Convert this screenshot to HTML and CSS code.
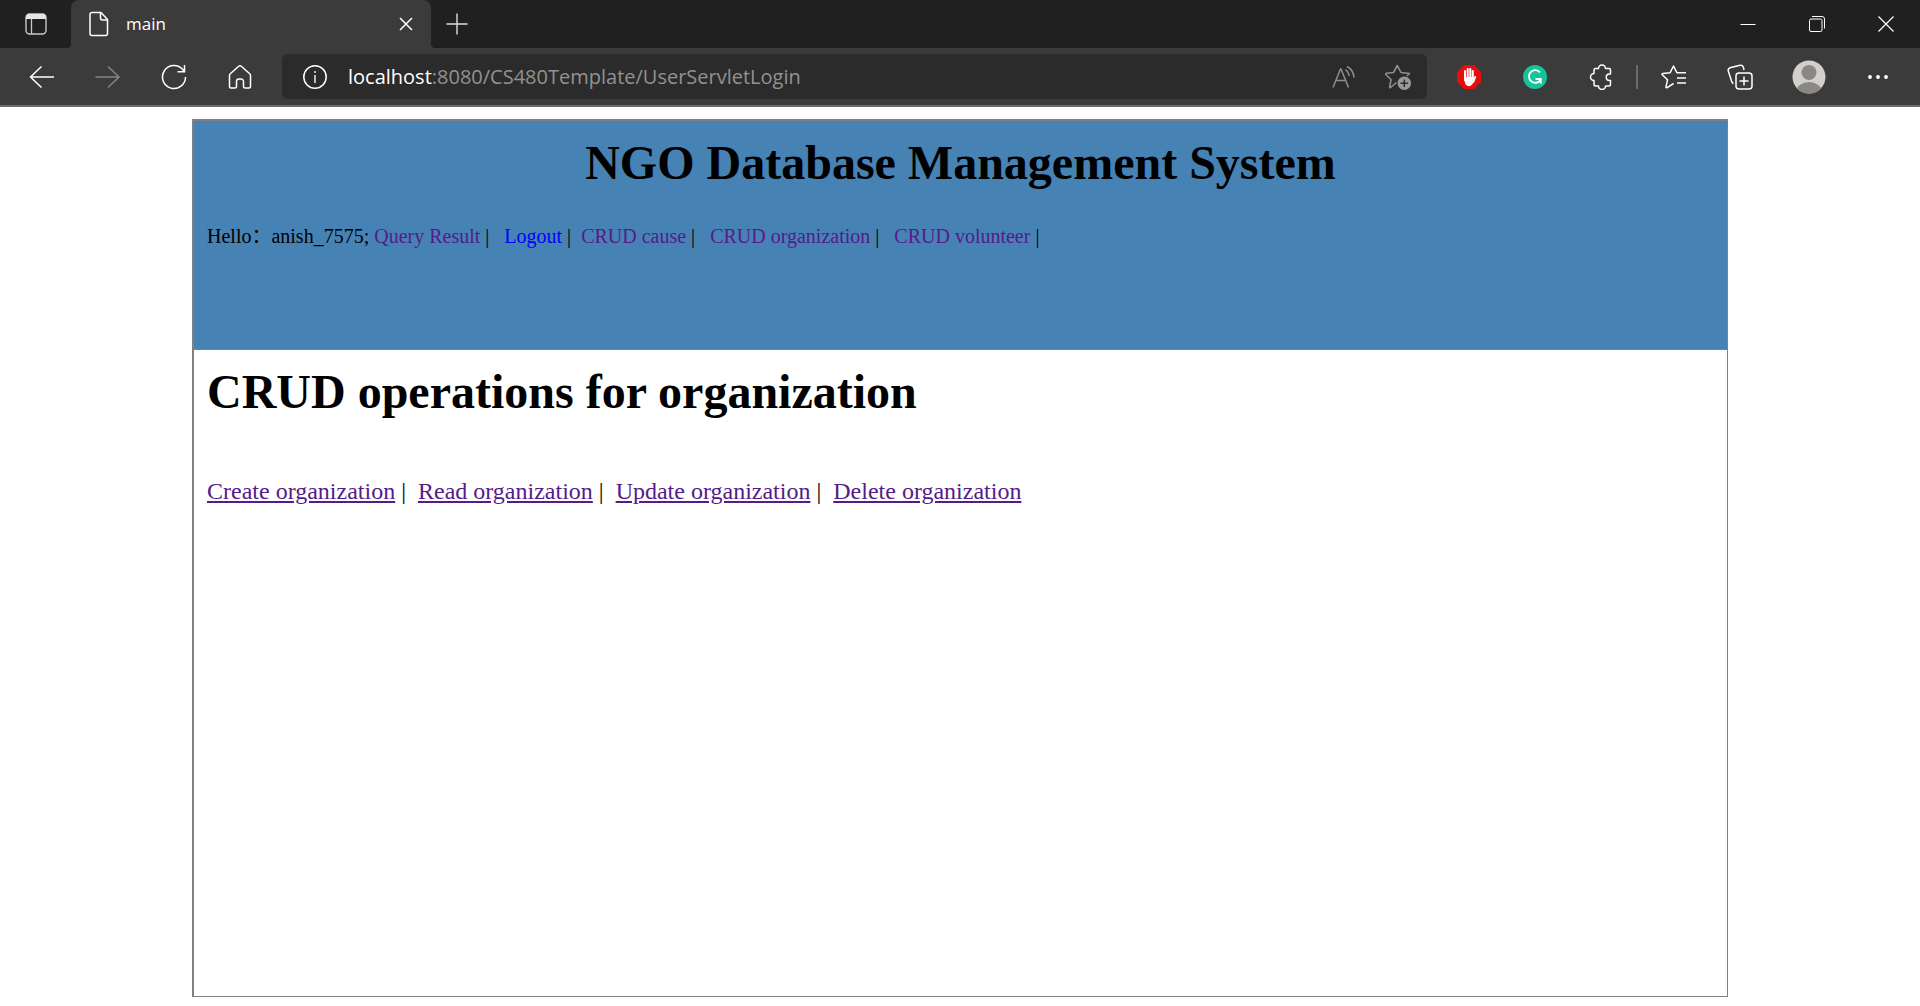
FILE: index.html
```html
<!DOCTYPE html>
<html lang="en">
<head>
<meta charset="utf-8">
<title>main</title>
<link rel="stylesheet" href="styles.css">
</head>
<body>
<header class="browser">
  <div class="tabstrip">
    <button class="tab-actions" aria-label="Tab actions menu">
      <svg width="22" height="22" viewBox="0 0 22 22"><rect x="1" y="1" width="20" height="20" rx="3.5" fill="none" stroke="#c8c8c8" stroke-width="1.4"/><path d="M1 6V4.5A3.5 3.5 0 0 1 4.500 1h13A3.500 3.500 0 0 1 21 4.500V6z" fill="#e6e6e6"/><path d="M6.500 6v15" stroke="#c8c8c8" stroke-width="1.300"/></svg>
    </button>
    <div class="tab">
      <svg width="20" height="26" viewBox="0 0 20 26" fill="none" stroke="#fff" stroke-width="1.500" stroke-linejoin="round"><path d="M3 1.500h9l6.500 7V22.500a2 2 0 0 1-2 2H3a2 2 0 0 1-2-2V3.500a2 2 0 0 1 2-2z"/><path d="M11.500 1.500v5.500a2 2 0 0 0 2 2h5"/></svg>
      <span class="tab-title">main</span>
      <button class="tab-close" aria-label="Close tab"><svg width="14" height="14" viewBox="0 0 14 14"><path d="M1 1l12 12M13 1L1 13" stroke="#fff" stroke-width="1.500"/></svg></button>
    </div>
    <button class="new-tab" aria-label="New tab"><svg width="22" height="22" viewBox="0 0 22 22"><path d="M11 .5v21M.5 11h21" stroke="#ddd" stroke-width="1.400"/></svg></button>
    <div class="window-buttons">
      <button aria-label="Minimize"><svg width="16" height="16" viewBox="0 0 16 16"><path d="M.5 8.500h15" stroke="#fff"/></svg></button>
      <button aria-label="Restore"><svg width="16" height="16" viewBox="0 0 16 16" fill="none" stroke="#fff"><rect x=".5" y="3" width="12.500" height="12.500" rx="1.500"/><path d="M3 .5h10A2.500 2.500 0 0 1 15.500 3v9.500"/></svg></button>
      <button aria-label="Close"><svg width="16" height="16" viewBox="0 0 16 16"><path d="M.5.5l15 15M15.500.5l-15 15" stroke="#fff" stroke-width="1.200"/></svg></button>
    </div>
  </div>
  <div class="toolbar">
    <button aria-label="Back"><svg width="26" height="24" viewBox="0 0 26 24" fill="none" stroke="#fff" stroke-width="1.500"><path d="M12.500 1.500L1.500 12l11 10.500M1.500 12h23.500"/></svg></button>
    <button aria-label="Forward"><svg width="26" height="24" viewBox="0 0 26 24" fill="none" stroke="#858585" stroke-width="1.500"><path d="M13 1.500L24 12 13 22.500M24 12H.5"/></svg></button>
    <button aria-label="Refresh"><svg width="26" height="26" viewBox="0 0 26 26" fill="none" stroke="#fff" stroke-width="1.500"><path d="M24.500 13A11.500 11.500 0 1 1 21.500 5.300L23.500 7.500M23.500 1v6.800h-7"/></svg></button>
    <button aria-label="Home"><svg width="24" height="26" viewBox="0 0 24 26" fill="none" stroke="#fff" stroke-width="1.500" stroke-linejoin="round"><path d="M1.500 11.500Q1.500 10.500 2.300 9.800L10.700 2.300Q12 1.200 13.300 2.300L21.700 9.800Q22.500 10.500 22.500 11.500V22.500a1.500 1.500 0 0 1-1.500 1.500H17a1.500 1.500 0 0 1-1.500-1.500V17.500a2.500 2.500 0 0 0-2.500-2.500h-2a2.500 2.500 0 0 0-2.500 2.500v5A1.500 1.500 0 0 1 7 24H3a1.500 1.500 0 0 1-1.500-1.500z"/></svg></button>
    <form class="address">
      <button type="button" class="info" aria-label="View site information"><svg width="24" height="24" viewBox="0 0 24 24"><circle cx="12" cy="12" r="11.200" fill="none" stroke="#fff" stroke-width="1.500"/><path d="M12 10v8M12 6v2" stroke="#ccc" stroke-width="1.800"/></svg></button>
      <label class="host" for="url">localhost</label>
      <input id="url" class="url" type="text" value=":8080/CS480Template/UserServletLogin">
      <button type="button" aria-label="Read aloud"><svg width="24" height="24" viewBox="0 0 24 24" fill="none" stroke="#8e8e8e" stroke-width="1.500"><path d="M1 22.500L8.500 4h.5l7.500 18.500M4 15.500h9.500M13.500 4.500a9 9 0 0 1 3.500 6.500M15 1.500a13 13 0 0 1 7 11"/></svg></button>
      <button type="button" aria-label="Add to favorites"><svg width="26" height="26" viewBox="0 0 26 26"><path d="M11.500 18.500L5.500 23.500Q4.500 24 4.700 22.800L6 15.500.8 10.500Q.5 9.500 1.500 9.300L8.500 8.500 12.300 1.500 16 8.500 24.500 9.500 22 12" fill="none" stroke="#8e8e8e" stroke-width="1.600" stroke-linejoin="round"/><circle cx="19.300" cy="19.300" r="6.700" fill="#999"/><path d="M19.300 15.500v7.600M15.500 19.300h7.600" stroke="#2b2b2b" stroke-width="1.500"/></svg></button>
    </form>
    <button aria-label="AdBlock"><svg width="24" height="24" viewBox="0 0 24 24"><path d="M7 0h10l7 7v10l-7 7H7l-7-7V7z" fill="#ea0c0c"/><g stroke="#fff" stroke-width="2" stroke-linecap="round"><path d="M8 6v9M10.700 4v10M13.300 4v10M15.800 6v9M18.200 12l-2 5"/></g><path d="M7 12h9.700v3l1.300-1-2.500 5a4 4 0 0 1-7.500-1.500Q7 15 7 12z" fill="#fff"/></svg></button>
    <button aria-label="Grammarly"><svg width="24" height="24" viewBox="0 0 24 24"><circle cx="12" cy="12" r="12" fill="#15c39a"/><path d="M17 7.300A6.300 6.300 0 1 0 17.500 15M12.500 14h5.300v4.500" fill="none" stroke="#fff" stroke-width="1.900"/></svg></button>
    <button aria-label="Extensions"><svg width="24" height="26" viewBox="0 0 24 26" fill="none" stroke="#fff" stroke-width="1.500" stroke-linejoin="round"><path d="M5 9.500V6A1.500 1.500 0 0 1 6.500 4.500H9.500a3.500 3.500 0 0 1 7 0H20a1.500 1.500 0 0 1 1.500 1.500V10h-1a3 3 0 0 0 0 6.500h1V20.500A1.500 1.500 0 0 1 20 22H16.500a3.500 3.500 0 0 1-7 0H6.500A1.500 1.500 0 0 1 5 20.500V16.500a3.500 3.500 0 0 1 0-7z"/></svg></button>
    <span class="divider"></span>
    <button aria-label="Favorites"><svg width="26" height="26" viewBox="0 0 26 26" fill="none" stroke="#fff" stroke-width="1.500" stroke-linejoin="round"><path d="M12.500 19.500L5.800 23.800Q4.700 24 5 22.800L6.500 15.800 1.200 10.800Q.8 9.800 2 9.500L9 8.800 12.500 2 16 8.800h9M16 14h9M16 19h9"/></svg></button>
    <button aria-label="Collections"><svg width="26" height="26" viewBox="0 0 26 26" fill="none" stroke="#fff" stroke-width="1.500"><rect x="9" y="9" width="16" height="16" rx="3"/><path d="M17 12.500v9M12.500 17h9M6.500 19.500Q5 19 4.500 17L1.200 6.800Q.8 4.500 3 3.800L13 1.200Q15.500.8 16.300 3L17 6"/></svg></button>
    <button class="profile" aria-label="Profile"><svg width="34" height="34" viewBox="0 0 34 34"><clipPath id="face"><circle cx="17" cy="17" r="16.500"/></clipPath><g clip-path="url(#face)"><rect width="34" height="34" fill="#d2d0ce"/><circle cx="17" cy="12.500" r="7.500" fill="#8a8785"/><ellipse cx="17" cy="32" rx="13" ry="10" fill="#8a8785"/></g></svg></button>
    <button aria-label="Settings and more"><svg width="20" height="4" viewBox="0 0 20 4" fill="#fff"><circle cx="2" cy="2" r="1.900"/><circle cx="10" cy="2" r="1.900"/><circle cx="18" cy="2" r="1.900"/></svg></button>
  </div>
</header>
<main class="page">
  <div class="banner">
    <h1>NGO Database Management System</h1>
    <nav class="menu">Hello：anish_7575; <a href="#" class="visited">Query Result</a> |&nbsp;&nbsp; <a href="#">Logout</a> |&nbsp; <a href="#" class="visited">CRUD cause</a> |&nbsp;&nbsp; <a href="#" class="visited">CRUD organization</a> |&nbsp;&nbsp; <a href="#" class="visited">CRUD volunteer</a> |</nav>
  </div>
  <section class="content">
    <h1>CRUD operations for organization</h1>
    <nav class="operations"><a href="#">Create organization</a> |&nbsp; <a href="#">Read organization</a> |&nbsp; <a href="#">Update organization</a> |&nbsp; <a href="#">Delete organization</a></nav>
  </section>
</main>
</body>
</html>
```
FILE: styles.css
```css
* { box-sizing: border-box; }

body {
  margin: 0;
  min-height: 100vh;
  display: flex;
  flex-direction: column;
  background: #fff;
  color: #000;
  font-family: "Liberation Serif", "Noto Sans CJK SC", serif;
}

button {
  display: flex;
  align-items: center;
  justify-content: center;
  padding: 0;
  border: 0;
  background: none;
}

.browser {
  border-bottom: 2px solid #6c6a6a;
  background: #3b3b3b;
  font-family: "Open Sans", sans-serif;
}

.tabstrip {
  display: flex;
  height: 48px;
  background: #202020;
}

.tab-actions { width: 71px; }

.tab {
  position: relative;
  display: flex;
  align-items: center;
  width: 360px;
  padding: 0 18px;
  border-radius: 8px 8px 0 0;
  background: #3b3b3b;
  color: #fff;
}

.tab::before,
.tab::after {
  content: "";
  position: absolute;
  bottom: 0;
  width: 4px;
  height: 4px;
}

.tab::before {
  left: -4px;
  background: radial-gradient(circle at 0 0, #202020 4px, #3b3b3b 4px);
}

.tab::after {
  right: -4px;
  background: radial-gradient(circle at 100% 0, #202020 4px, #3b3b3b 4px);
}

.tab-title {
  flex: 1;
  margin-left: 17px;
  font-size: 17px;
  line-height: 24px;
}

.new-tab { width: 52px; }

.window-buttons {
  display: flex;
  margin-left: auto;
}

.window-buttons button { width: 69px; }

.toolbar {
  display: flex;
  align-items: center;
  height: 57px;
  padding: 0 9px;
}

.toolbar > button {
  width: 66px;
  height: 45px;
}

.toolbar > .profile { width: 72px; }

.address {
  display: flex;
  flex: 1;
  align-items: center;
  height: 45px;
  margin: 0 9px;
  padding-right: 2px;
  border-radius: 6px;
  background: #2b2b2b;
  font-size: 20px;
  line-height: 28px;
}

.address button {
  width: 54px;
  height: 45px;
}

.address .info { width: 66px; }

.host { color: #fff; }

.url {
  flex: 1;
  min-width: 0;
  padding: 0;
  border: 0;
  outline: 0;
  background: none;
  color: #929292;
  font: inherit;
}

.divider {
  width: 2px;
  height: 24px;
  margin: 0 3px 0 2px;
  background: #6a6a6a;
}

.page {
  display: flex;
  flex: 1;
  flex-direction: column;
  width: 80%;
  margin: 12px auto 9px;
  border: solid #808080;
  border-width: 2px 1px 1px 2px;
}

.page h1 {
  margin: 0;
  font-size: 48px;
  line-height: 58px;
}

.banner {
  min-height: 229px;
  padding: 13px;
  border-bottom: 1px solid #808080;
  background: #4682b4;
}

.banner h1 { text-align: center; }

.menu {
  margin-top: 32px;
  font-size: 20px;
  line-height: 24px;
}

.menu a {
  color: #00f;
  text-decoration: none;
}

.menu .visited { color: #551a8b; }

.content { padding: 13px; }

.operations {
  margin-top: 56px;
  font-size: 24px;
  line-height: 28px;
}

.operations a { color: #551a8b; }
```
